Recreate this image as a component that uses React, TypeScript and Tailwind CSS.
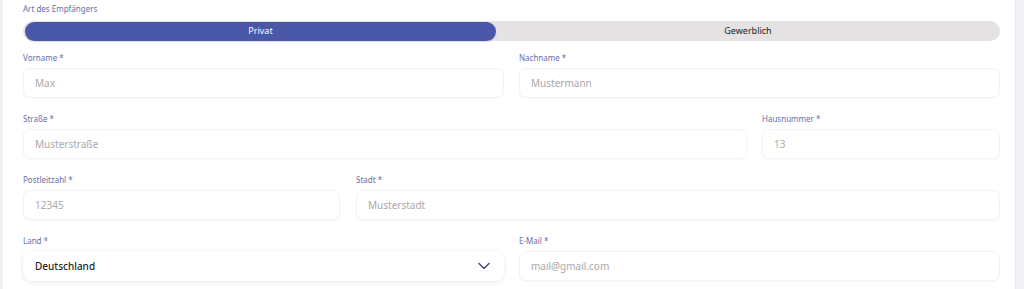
import React from "react";

const font = { fontFamily: '"Noto Sans", "Open Sans", sans-serif' };

function Label({ children }: { children: React.ReactNode }) {
  return (
    <div className="h-[10px] text-[8px] leading-[10px] text-[#6a6ea8] mb-[5px] whitespace-nowrap">
      {children}
    </div>
  );
}

function Input({ placeholder }: { placeholder: string }) {
  return (
    <div className="h-[30px] rounded-[7px] border border-[#f3f3f5] bg-white shadow-[0_1px_2px_rgba(0,0,0,0.03)] flex items-center pl-[11px] text-[10px] text-[#a8a8ac]">
      {placeholder}
    </div>
  );
}

function Field({ label, placeholder }: { label: string; placeholder: string }) {
  return (
    <div className="flex flex-col min-w-0">
      <Label>{label}</Label>
      <Input placeholder={placeholder} />
    </div>
  );
}

export default function App() {
  return (
    <div className="w-[1024px] h-[289px] bg-white flex overflow-hidden" style={font}>
      <div className="w-[3px] bg-[#f0f0f2] shrink-0" />
      <div className="flex-1 pl-[20px] pr-[15px] pt-[4px]">
        <Label>Art des Empfängers</Label>
        <div className="mt-[7px] h-[20px] rounded-full bg-[#e4e2e3] flex items-center">
          <div className="ml-[2px] w-[471px] h-[19px] rounded-full bg-[#4a56a8] flex items-center justify-center text-[9px] text-white shadow-[0_1px_2px_rgba(0,0,0,0.15)]">
            Privat
          </div>
          <div className="flex-1 flex items-center justify-center text-[9px] text-[#222]">
            Gewerblich
          </div>
        </div>
        <div className="mt-[12px] flex flex-col gap-[16px]">
          <div className="grid grid-cols-2 gap-[15px]">
            <Field label="Vorname *" placeholder="Max" />
            <Field label="Nachname *" placeholder="Mustermann" />
          </div>
          <div className="grid grid-cols-[724fr_238fr] gap-[15px]">
            <Field label="Straße *" placeholder="Musterstraße" />
            <Field label="Hausnummer *" placeholder="13" />
          </div>
          <div className="grid grid-cols-[317fr_644fr] gap-[16px]">
            <Field label="Postleitzahl *" placeholder="12345" />
            <Field label="Stadt *" placeholder="Musterstadt" />
          </div>
          <div className="grid grid-cols-2 gap-[15px]">
            <div className="flex flex-col min-w-0">
              <Label>Land *</Label>
              <div className="h-[30px] rounded-[8px] bg-white shadow-[0_1px_4px_rgba(0,0,0,0.10)] flex items-center justify-between pl-[12px] pr-[14px] text-[10px] font-medium text-[#1f1f24]">
                <span>Deutschland</span>
                <svg width="12" height="8" viewBox="0 0 12 8" fill="none">
                  <path d="M1 1.5L6 6.5L11 1.5" stroke="#3d417a" strokeWidth="1.4" strokeLinecap="round" strokeLinejoin="round" />
                </svg>
              </div>
            </div>
            <Field label="E-Mail *" placeholder="mail@gmail.com" />
          </div>
        </div>
      </div>
      <div className="w-[9px] shrink-0 bg-[#f1f2f5] border-l border-[#e6e7ec]" />
    </div>
  );
}
